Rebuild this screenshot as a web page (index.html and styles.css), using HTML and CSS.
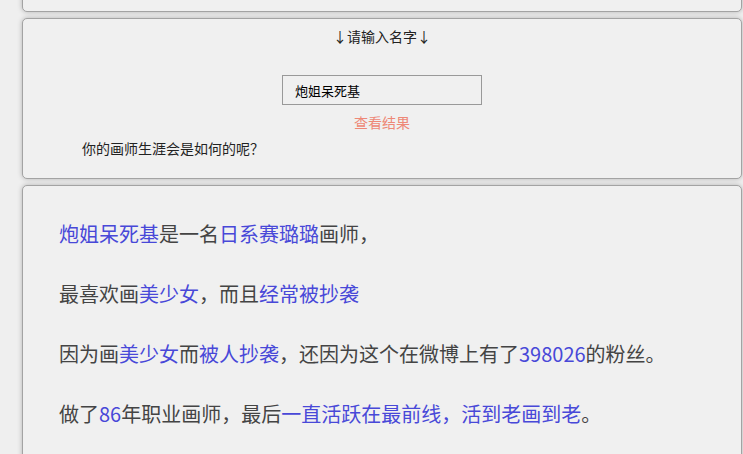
FILE: index.html
```html
<!DOCTYPE html>
<html lang="zh-CN">
<head>
  <meta charset="UTF-8">
  <meta name="viewport" content="width=device-width, initial-scale=1.0">
  <title>画师生涯</title>
  <link rel="stylesheet" href="styles.css">
</head>
<body>
  <div class="page">
    <div class="box top-box"></div>

    <div class="box input-box">
      <div class="prompt">↓请输入名字↓</div>
      <div class="field-row">
        <input class="name-input" type="text" value="炮姐呆死基">
      </div>
      <div class="submit">查看结果</div>
      <div class="question">你的画师生涯会是如何的呢？</div>
    </div>

    <div class="box result-box">
      <p><span class="hl">炮姐呆死基</span>是一名<span class="hl">日系赛璐璐</span>画师，</p>
      <p>最喜欢画<span class="hl">美少女</span>，而且<span class="hl">经常被抄袭</span></p>
      <p>因为画<span class="hl">美少女</span>而<span class="hl">被人抄袭</span>，还因为这个在微博上有了<span class="hl">398026</span>的粉丝。</p>
      <p>做了<span class="hl">86</span>年职业画师，最后<span class="hl">一直活跃在最前线，活到老画到老</span>。</p>
    </div>
  </div>
</body>
</html>
```

FILE: styles.css
```css
html, body {
  margin: 0;
  padding: 0;
  height: 100%;
  overflow: hidden;
}
body {
  background-color: #efefef;
  font-family: "Noto Sans CJK SC", "Noto Sans", sans-serif;
  color: #444;
}
.page {
  margin-left: 22px;
  width: 720px;
  display: flex;
  flex-direction: column;
  gap: 6px;
}
.box {
  box-sizing: border-box;
  background-color: #f0f0f0;
  border: 1px solid #a3a3a3;
  border-radius: 5px;
  box-shadow: 0 0 5px rgba(0, 0, 0, 0.25);
}
.top-box {
  margin-top: -20px;
  height: 32px;
}
.input-box {
  height: 161px;
}
.prompt {
  text-align: center;
  font-size: 14px;
  line-height: 20px;
  margin-top: 7px;
  color: #222;
}
.field-row {
  display: flex;
  justify-content: center;
  margin-top: 29px;
}
.name-input {
  box-sizing: border-box;
  width: 200px;
  height: 30px;
  border: 1px solid #999;
  background-color: #f0f0f0;
  padding: 0 12px;
  font-family: "Noto Sans CJK SC", sans-serif;
  font-size: 13px;
  color: #000;
  outline: none;
}
.submit {
  text-align: center;
  font-size: 14px;
  line-height: 20px;
  margin-top: 7px;
  color: #ee8877;
}
.question {
  font-size: 14px;
  line-height: 20px;
  margin-top: 6px;
  padding-left: 59px;
  color: #222;
}
.result-box {
  height: 300px;
  padding: 18px 0 0 36px;
}
.result-box p {
  margin: 0;
  font-size: 20px;
  line-height: 60px;
}
.hl {
  color: #4848d8;
}
```
